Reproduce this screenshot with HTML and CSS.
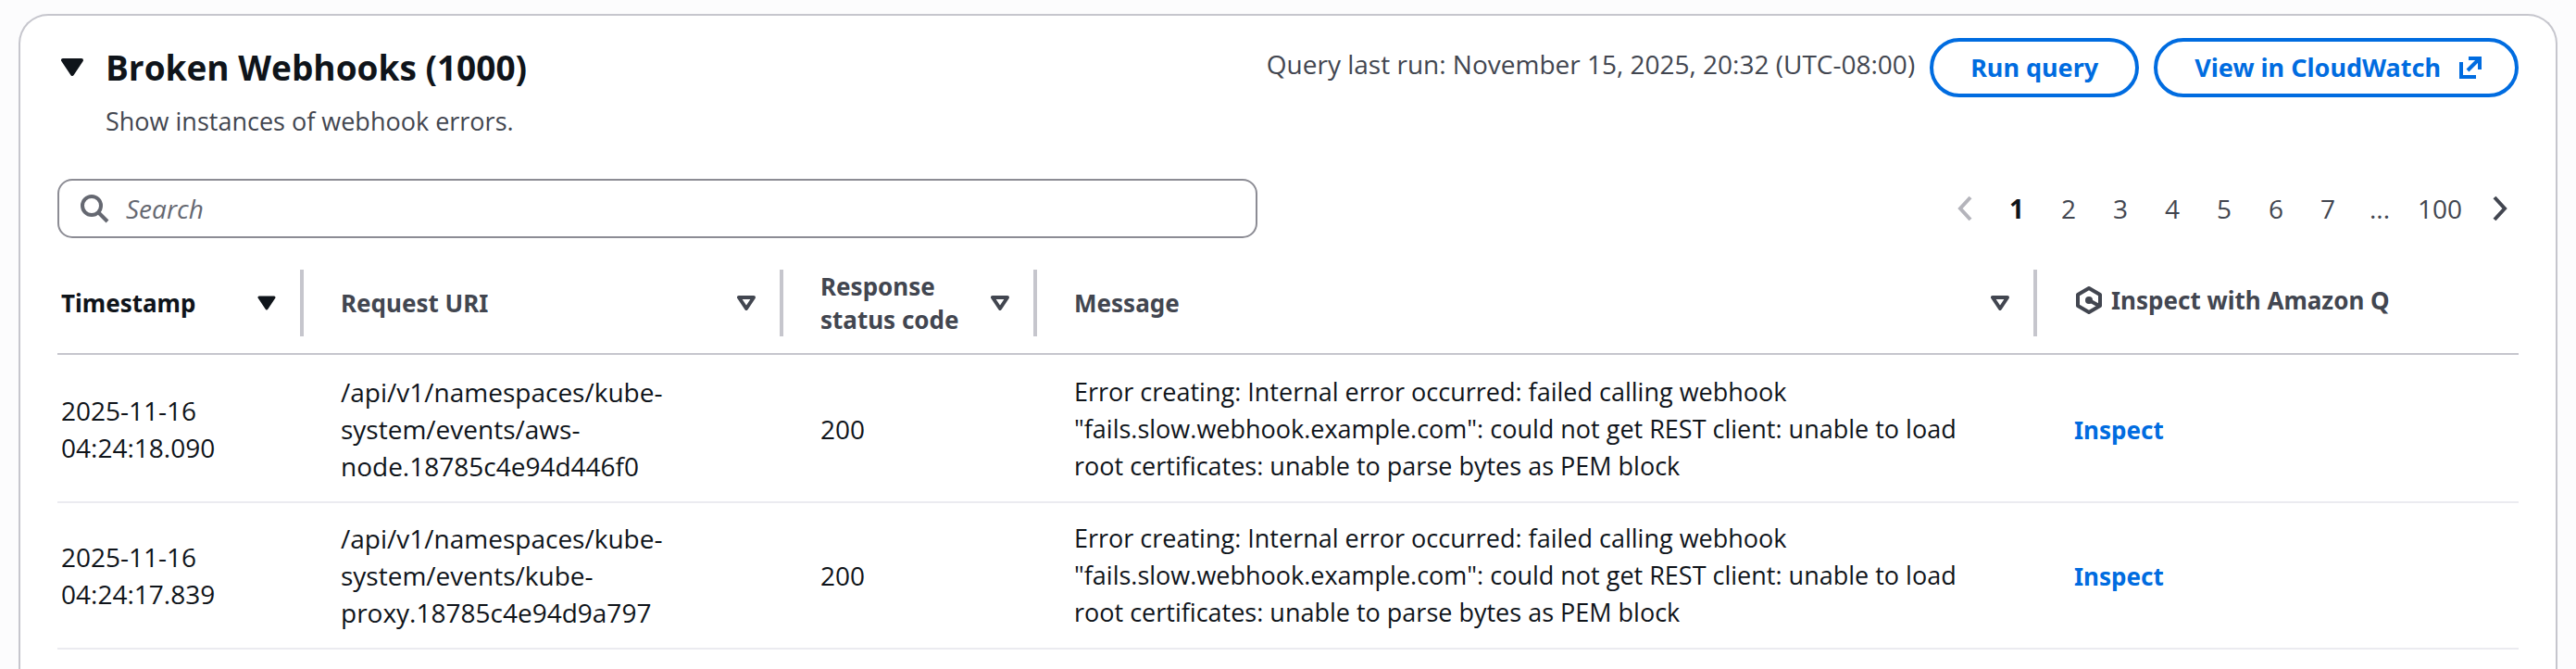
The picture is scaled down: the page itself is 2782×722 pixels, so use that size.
FILE: index.html
```html
<!DOCTYPE html>
<html lang="en">
<head>
    <meta charset="UTF-8">
    <meta name="viewport" content="width=device-width, initial-scale=1.0">
    <title>Broken Webhooks</title>
    <link rel="stylesheet" href="styles.css">
</head>
<body>

<section class="panel">
    <header class="panel-header">
        <button type="button" class="collapse" aria-label="Collapse Broken Webhooks" aria-expanded="true">
            <svg width="24" height="20" viewBox="0 0 24 20"><path d="M2 2h20L12 17z" fill="currentColor" stroke="currentColor" stroke-width="4" stroke-linejoin="round"/></svg>
        </button>
        <div class="heading">
            <h2>Broken Webhooks (1000)</h2>
            <p>Show instances of webhook errors.</p>
        </div>
        <div class="actions">
            <span class="last-run">Query last run: November 15, 2025, 20:32 (UTC-08:00)</span>
            <button type="button" class="btn">Run query</button>
            <a href="#" class="btn btn-external">View in CloudWatch
                <svg width="24" height="24" viewBox="0 0 24 24" fill="none" stroke="currentColor" stroke-width="4"><path d="M10 2h12v12M22 2L9 15M2 6v16h16"/></svg>
            </a>
        </div>
    </header>

    <div class="tools">
        <label class="search">
            <svg width="32" height="32" viewBox="0 0 32 32" fill="none" stroke="currentColor" stroke-width="4"><circle cx="13" cy="13" r="10"/><path d="M20 20l10 10"/></svg>
            <input type="search" placeholder="Search" aria-label="Search">
        </label>
        <nav class="pagination" aria-label="Pages">
            <button type="button" class="arrow prev" disabled aria-label="Previous page">
                <svg width="16" height="28" viewBox="0 0 16 28" fill="none" stroke="currentColor" stroke-width="4"><path d="M14 2L3 14l11 12"/></svg>
            </button>
            <button type="button" class="page current" aria-current="page">1</button>
            <button type="button" class="page">2</button>
            <button type="button" class="page">3</button>
            <button type="button" class="page">4</button>
            <button type="button" class="page">5</button>
            <button type="button" class="page">6</button>
            <button type="button" class="page">7</button>
            <span class="page">...</span>
            <button type="button" class="page last">100</button>
            <button type="button" class="arrow next" aria-label="Next page">
                <svg width="16" height="28" viewBox="0 0 16 28" fill="none" stroke="currentColor" stroke-width="4"><path d="M2 2l11 12L2 26"/></svg>
            </button>
        </nav>
    </div>

    <table class="events">
        <colgroup>
            <col class="col-time">
            <col class="col-uri">
            <col class="col-status">
            <col class="col-message">
            <col class="col-inspect">
        </colgroup>
        <thead>
            <tr>
                <th scope="col" class="sorted" aria-sort="descending">
                    <div class="th-inner">
                        <span>Timestamp</span>
                        <button type="button" class="sort" aria-label="Sort by timestamp">
                            <svg width="20" height="16" viewBox="0 0 20 16"><path d="M2 2h16l-8 12z" fill="currentColor" stroke="currentColor" stroke-width="3" stroke-linejoin="round"/></svg>
                        </button>
                    </div>
                </th>
                <th scope="col">
                    <div class="th-inner">
                        <span>Request URI</span>
                        <button type="button" class="sort" aria-label="Sort by request URI">
                            <svg width="20" height="16" viewBox="0 0 20 16"><path d="M2 2h16l-8 12z" fill="none" stroke="currentColor" stroke-width="4" stroke-linejoin="round"/></svg>
                        </button>
                    </div>
                </th>
                <th scope="col">
                    <div class="th-inner">
                        <span>Response status code</span>
                        <button type="button" class="sort" aria-label="Sort by response status code">
                            <svg width="20" height="16" viewBox="0 0 20 16"><path d="M2 2h16l-8 12z" fill="none" stroke="currentColor" stroke-width="4" stroke-linejoin="round"/></svg>
                        </button>
                    </div>
                </th>
                <th scope="col">
                    <div class="th-inner">
                        <span>Message</span>
                        <button type="button" class="sort" aria-label="Sort by message">
                            <svg width="20" height="16" viewBox="0 0 20 16"><path d="M2 2h16l-8 12z" fill="none" stroke="currentColor" stroke-width="4" stroke-linejoin="round"/></svg>
                        </button>
                    </div>
                </th>
                <th scope="col">
                    <div class="th-inner with-icon">
                        <svg width="32" height="32" viewBox="0 0 32 32" fill="none" stroke="currentColor" stroke-width="4" stroke-linejoin="round"><path d="M16 3l12 7v12l-12 7-12-7V10z"/><path d="M16 16l11 6"/><circle cx="16" cy="16" r="4" fill="currentColor" stroke="none"/></svg>
                        <span>Inspect with Amazon Q</span>
                    </div>
                </th>
            </tr>
        </thead>
        <tbody>
            <tr>
                <td>2025-11-16 04:24:18.090</td>
                <td>/api/v1/namespaces/kube-system/events/aws-node.18785c4e94d446f0</td>
                <td>200</td>
                <td class="message">Error creating: Internal error occurred: failed calling webhook "fails.slow.webhook.example.com": could not get REST client: unable to load root certificates: unable to parse bytes as PEM block</td>
                <td><a href="#" class="inspect">Inspect</a></td>
            </tr>
            <tr>
                <td>2025-11-16 04:24:17.839</td>
                <td>/api/v1/namespaces/kube-system/events/kube-proxy.18785c4e94d9a797</td>
                <td>200</td>
                <td class="message">Error creating: Internal error occurred: failed calling webhook "fails.slow.webhook.example.com": could not get REST client: unable to load root certificates: unable to parse bytes as PEM block</td>
                <td><a href="#" class="inspect">Inspect</a></td>
            </tr>
        </tbody>
    </table>
</section>

</body>
</html>
```
FILE: styles.css
```css
* {
    box-sizing: border-box;
}
body {
    font-family: "Open Sans", "Noto Sans", sans-serif;
    font-size: 28px;
    line-height: 40px;
    color: #0f141a;
    background-color: #fcfcfd;
    margin: 0;
    padding: 15px 20px 0;
}
button, input {
    font: inherit;
    color: inherit;
    background: none;
    border: none;
    margin: 0;
    padding: 0;
}
button {
    cursor: pointer;
}
svg {
    display: block;
    flex: none;
}
.panel {
    min-height: calc(100vh - 15px);
    padding: 24px 40px;
    background-color: #fff;
    border: 2px solid #c6c6cd;
    border-bottom: none;
    border-radius: 32px 32px 0 0;
}

/* Header */
.panel-header {
    display: flex;
    align-items: flex-start;
}
.collapse {
    width: 52px;
    padding: 22px 4px;
}
.heading {
    flex: 1;
    padding-top: 8px;
}
h2 {
    margin: 0;
    font-size: 37px;
    line-height: 48px;
}
p {
    margin: 16px 0 0;
    font-size: 27px;
    line-height: 36px;
    color: #424650;
}
.actions {
    display: flex;
    gap: 16px;
}
.last-run {
    line-height: 56px;
    color: #424650;
}
.btn {
    display: flex;
    align-items: center;
    height: 64px;
    padding: 0 40px;
    border: 4px solid #006ce0;
    border-radius: 32px;
    color: #006ce0;
    font-family: "Noto Sans", sans-serif;
    font-size: 27px;
    font-weight: bold;
    text-decoration: none;
    white-space: nowrap;
}
.btn-external {
    gap: 20px;
    padding-right: 36px;
}

/* Search and pagination */
.tools {
    display: flex;
    justify-content: space-between;
    align-items: center;
    margin-top: 44px;
}
.search {
    display: flex;
    align-items: center;
    gap: 18px;
    width: 1296px;
    height: 64px;
    padding: 0 22px;
    border: 2px solid #8c8c94;
    border-radius: 16px;
    color: #656871;
}
.search input {
    flex: 1;
    outline: none;
}
.search input::placeholder {
    color: #656871;
    font-style: italic;
    opacity: 1;
}
.pagination {
    display: flex;
    align-items: center;
    color: #424650;
}
.prev {
    padding: 0 20px 0 12px;
}
.next {
    padding: 0 12px 0 20px;
}
.arrow:disabled {
    color: #b4b4bb;
}
.page {
    width: 56px;
    text-align: center;
}
.last {
    width: 74px;
}
.current {
    color: #0f141a;
    font-weight: bold;
}

/* Events table */
.events {
    width: 100%;
    margin-top: 34px;
    table-layout: fixed;
    border-collapse: separate;
    border-spacing: 0;
}
.col-time {
    width: 266px;
}
.col-uri {
    width: 518px;
}
.col-status {
    width: 274px;
}
.col-inspect {
    width: 520px;
}
th {
    padding: 0 0 18px;
    font-family: "Noto Sans", sans-serif;
    font-size: 26px;
    line-height: 36px;
    text-align: left;
    color: #424650;
    border-bottom: 2px solid #c6c6cd;
}
.th-inner {
    display: flex;
    justify-content: space-between;
    align-items: center;
    height: 72px;
    padding: 0 26px 0 40px;
    border-right: 4px solid #c6c6cd;
}
.with-icon {
    justify-content: flex-start;
    gap: 8px;
    padding-bottom: 6px;
    border-right: none;
}
.sorted {
    color: #0f141a;
}
.sorted .th-inner {
    padding-left: 4px;
}
td {
    padding: 18px 40px;
    border-bottom: 2px solid #ebebf0;
}
tbody tr:first-child td {
    border-top: 2px solid transparent;
}
td:first-child {
    padding-left: 4px;
}
.message {
    font-size: 27px;
}
.inspect {
    color: #006ce0;
    font-family: "Noto Sans", sans-serif;
    font-size: 26px;
    font-weight: bold;
    text-decoration: none;
}
```
